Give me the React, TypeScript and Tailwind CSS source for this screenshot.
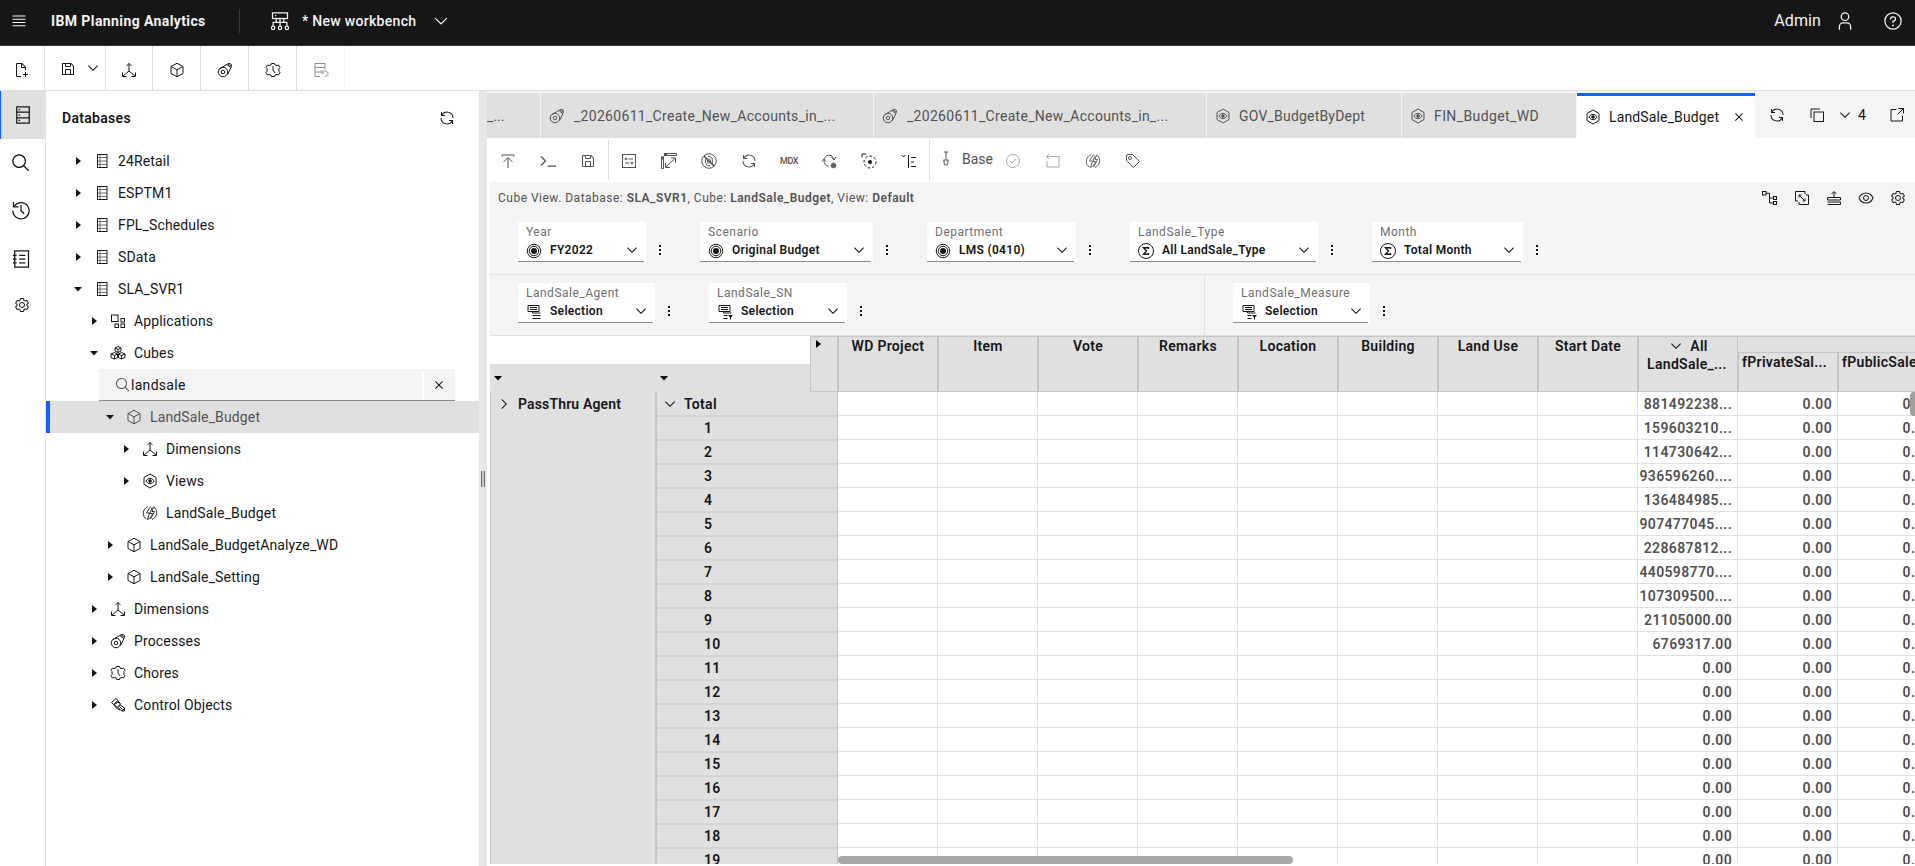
import type { ReactNode } from "react";
import clsx from "clsx";

// All glyphs live on a 32 unit grid, drawn with a 2 unit stroke
const solid = (d: string) => <path d={d} fill="currentColor" stroke="none" />;

const ICONS: Record<string, ReactNode> = {
  menu: <path d="M3 6h26M3 12.500h26M3 19h26M3 25.500h26" />,
  chevron: solid("M16 22 6 12l1.4-1.4 8.6 8.6 8.6-8.6L26 12z"),
  chevronRight: solid("M22 16 12 26l-1.4-1.4 8.6-8.6-8.6-8.6L12 6z"),
  workbench: (
    <>
      <rect x="4" y="3" width="24" height="9" />
      <path d="M8 7.5h2M16 12v12M10 18v-6M22 18v-6M5 24v-6h22v6" />
      <circle cx="5" cy="27" r="2.7" />
      <circle cx="16" cy="27" r="2.7" />
      <circle cx="27" cy="27" r="2.7" />
    </>
  ),
  user: <path d="M16 3a6 6 0 1 1 0 12a6 6 0 0 1 0-12M7 30v-5a6 6 0 0 1 6-6h6a6 6 0 0 1 6 6v5" />,
  help: (
    <>
      <circle cx="16" cy="16" r="13" />
      <path d="M12 13.5V13a3.5 3.5 0 0 1 3.5-3.5h1a3.25 3.25 0 0 1 0 6.7H16V19" />
      <circle cx="16" cy="23" r="1.5" fill="currentColor" stroke="none" />
    </>
  ),
  newDoc: (
    <>
      {solid("M30 24h-4v-4h-2v4h-4v2h4v4h2v-4h4z")}
      {solid("M16 28H8V4h8v6a2 2 0 0 0 2 2h6v4h2V10a.91.91 0 0 0-.3-.7l-7-7A.91.91 0 0 0 18 2H8a2 2 0 0 0-2 2v24a2 2 0 0 0 2 2h8zM18 4.4 23.6 10H18z")}
    </>
  ),
  save: solid("M27.71 9.29l-5-5A1 1 0 0 0 22 4H6a2 2 0 0 0-2 2v20a2 2 0 0 0 2 2h20a2 2 0 0 0 2-2V10a1 1 0 0 0-.29-.71zM12 6h8v4h-8zm8 20h-8v-8h8zm2 0v-8a2 2 0 0 0-2-2h-8a2 2 0 0 0-2 2v8H6V6h4v4a2 2 0 0 0 2 2h8a2 2 0 0 0 2-2V6.41l4 4V26z"),
  dimension: <path d="M16 3v15M11 8l5-5 5 5M16 18 4 28M16 18l12 10M3 21v8h8M29 21v8h-8" />,
  cube: <path d="M16 2.5 28 9v14l-12 6.5L4 23V9zM4 9l12 6.7L28 9M16 15.7v13.8" />,
  process: (
    <>
      <circle cx="12" cy="20" r="9.500" />
      <circle cx="12" cy="20" r="3.5" />
      <path d="M5 14 21 4l5-1 3 2-1 6-7 14M20 5l7 6M22 3.5l6 5" />
    </>
  ),
  chore: (
    <>
      <path d="M13 3h6l1 3 4 1 3-1 3 5-2 2v6l2 2-3 5-3-1-4 1-1 3h-6l-1-3-4-1-3 1-3-5 2-2v-6l-2-2 3-5 3 1 4-1z" />
      <path d="M16 8v8l4 6" />
    </>
  ),
  dbUndo: (
    <>
      <path d="M14 29H4V3h20v12M4 11h20M4 20h10M8 7h1M8 15.500h1M8 24.500h1" />
      <path d="M16 16v6h6M17 21c4-5 12-4 13 2 0 4-3 6-6 6" />
    </>
  ),
  database: (
    <>
      <rect x="6" y="3" width="20" height="26" />
      <path d="M6 11.500h20M6 20.500h20M9 7.300h2.500M9 16h2.500M9 24.700h2.500" />
    </>
  ),
  databaseSm: (
    <>
      <rect x="7" y="3" width="19" height="26" />
      <path d="M7 9h19M7 16h19M7 23h19M12 3v26" strokeWidth="1.200" />
    </>
  ),
  search: solid("M29 27.586l-7.552-7.552a11.018 11.018 0 1 0-1.414 1.414L27.586 29zM4 13a9 9 0 1 1 9 9 9.01 9.01 0 0 1-9-9z"),
  history: (
    <>
      <path d="M5.5 9.500A13 13 0 1 1 3 17M4 3v8h8" />
      <path d="M16 8v9l5 5" />
    </>
  ),
  notebook: (
    <>
      <rect x="6" y="3" width="22" height="26" />
      <path d="M3 10h6M3 16h6M3 22h6M13 10h10M13 16h10M13 22h10" />
    </>
  ),
  settings: (
    <>
      {solid("M27 16.760c0-.25 0-.5 0-.76s0-.51 0-.77l1.920-1.680A2 2 0 0 0 29.300 11L26.940 7a2 2 0 0 0-1.730-1 2 2 0 0 0-.64.1l-2.430.82a11.350 11.350 0 0 0-1.310-.75l-.51-2.520a2 2 0 0 0-2-1.610H13.640a2 2 0 0 0-2 1.610l-.51 2.520a11.480 11.480 0 0 0-1.320.75L7.430 6.060A2 2 0 0 0 6.790 6 2 2 0 0 0 5.060 7L2.700 11a2 2 0 0 0 .41 2.510L5 15.240c0 .25 0 .5 0 .76s0 .51 0 .77l-1.890 1.680A2 2 0 0 0 2.700 21L5.060 25a2 2 0 0 0 1.730 1 2 2 0 0 0 .64-.1l2.430-.82a11.350 11.350 0 0 0 1.310.75l.51 2.520a2 2 0 0 0 2 1.610h4.720a2 2 0 0 0 2-1.610l.51-2.520a11.480 11.480 0 0 0 1.320-.75l2.420.82a2 2 0 0 0 .64.1 2 2 0 0 0 1.730-1L29.300 21a2 2 0 0 0-.41-2.510zM25.210 24l-3.430-1.160a8.860 8.860 0 0 1-2.710 1.570L18.360 28h-4.720l-.71-3.550a9.360 9.360 0 0 1-2.700-1.570L6.790 24 4.430 20l2.720-2.400a8.900 8.900 0 0 1 0-3.130L4.430 12 6.790 8l3.430 1.160a8.860 8.860 0 0 1 2.710-1.570L13.640 4h4.720l.71 3.550a9.360 9.360 0 0 1 2.700 1.570L25.210 8 27.570 12l-2.720 2.400a8.900 8.900 0 0 1 0 3.130L27.570 20z")}
      <circle cx="16" cy="16" r="5" />
    </>
  ),
  renew: solid("M12 10H6.780A11 11 0 0 1 27 16h2A13 13 0 0 0 6 7.680V4H4v8h8zm8 12h5.220A11 11 0 0 1 5 16H3a13 13 0 0 0 23 8.320V28h2v-8h-8z"),
  close: solid("M24 9.400 22.600 8 16 14.600 9.400 8 8 9.400l6.600 6.600L8 22.600 9.400 24l6.600-6.600 6.600 6.600 1.400-1.400-6.600-6.600z"),
  apps: (
    <>
      <rect x="3" y="4" width="13" height="13" />
      <rect x="22" y="11" width="7" height="7" />
      <rect x="10" y="22" width="7" height="7" />
      <rect x="22" y="22" width="7" height="7" />
    </>
  ),
  cubes: (
    <path d="m16 3 6 3v6l-6 3-6-3V6zM10 6l6 3 6-3M16 9v6M9 15l6 3v7l-6 3-7-3v-7zM2 18l7 3 6-3M9 21v7M23 15l-6 3v7l6 3 7-3v-7zM30 18l-7 3-6-3M23 21v7" />
  ),
  view: (
    <>
      <path d="M16 2 28 9v14l-12 7-12-7V9z" />
      <path d="M7.500 16q8.500-11 17 0-8.500 11-17 0z" />
      <circle cx="16" cy="16" r="2.500" fill="currentColor" />
    </>
  ),
  bolt: (
    <path d="M12 3C0 8 0 24 9 28M20 29c12-5 12-21 3-25M17 3 9 16h6l-4 13c6-2 9-7 10-12h-5l4-12M23 4l-3 9h5l-8 15" strokeWidth="1.800" />
  ),
  control: (
    <path d="M3 11 12 3l4 4-9 8zM9 15l7-5 5 4-7 7zM16 21l5-5 8 6v6h-5zM7 15l8 9 5 2M16 8l5 5M20 20l5 5M24 28l5-5" />
  ),
  upload: <path d="M4 7V4h24v3M16 30V10M7 18l9-9 9 9" />,
  console: <path d="m2 7 9 9-9 9M15 26h17" strokeWidth="2.500" />,
  panel: (
    <>
      <rect x="3" y="3" width="26" height="26" />
      <circle cx="10" cy="12" r="1.800" />
      <circle cx="22" cy="20" r="1.800" />
      <path d="M15 12h9M8 20h9" />
    </>
  ),
  resize: (
    <>
      <path d="M1 8h4v23H1zM7 1h24v4H7zM10 28 28 11M20 10h9v9M9 20v9h9" />
      {solid("M0 7h6v6H0zM6 0h6v6H6z")}
    </>
  ),
  exclude: (
    <>
      <circle cx="16" cy="16" r="14.500" />
      <path d="M14 7c7-2 11 6 8 14M18 25c-7 2-11-6-8-14M15 12c4-1 5 3 4 6M17 20c-4 1-5-3-4-6" />
      <path d="m6 6 20 20" strokeWidth="3.200" />
    </>
  ),
  renewCog: (
    <>
      <path d="M6 15C6 3 22 0 26 12M21 9l5 5 4-6M2 17l4-5 4 5M6 15c0 7 4 11 9 11" />
      <circle cx="25" cy="25" r="3.500" strokeWidth="3" />
      <path d="M25 19v12M19 25h12M21 21l8 8M29 21l-8 8" strokeWidth="1.200" />
    </>
  ),
  focus: (
    <>
      <circle cx="18" cy="18" r="12" strokeDasharray="5 4" />
      <circle cx="18" cy="18" r="4" fill="currentColor" stroke="none" />
      <path d="M2 9V2h8" />
    </>
  ),
  collapse: <path d="m1 4 4 4 4-4M15 4v26M20 9h10M20 18h6M20 27h10" />,
  sandbox: (
    <>
      <path d="M12 2h8M16 2v15M11 18h10" />
      <path d="M12 18v6l2 4h4l2-4v-6" />
    </>
  ),
  check: (
    <>
      <circle cx="16" cy="16" r="13" />
      <path d="m10 16 4 4 8-8" />
    </>
  ),
  undo: <path d="M8 2 3 7l5 5M3 7h25v21H4V16" />,
  tag: (
    <>
      <path d="M3 4v11l14 14 12-12L15 3H4z" />
      <circle cx="10" cy="10" r="3" />
    </>
  ),
  copy: (
    <>
      <rect x="10" y="10" width="19" height="19" />
      <path d="M4 22V4h18" />
    </>
  ),
  launch: <path d="M15 5H4v23h23V17M19 3h10v10M29 3 17 15" />,
  hierarchy: (
    <>
      <rect x="1" y="3" width="7" height="7" />
      <path d="M8 6.500h7V26h7M15 16h7" />
      <rect x="23" y="13" width="6" height="6" />
      <rect x="23" y="23" width="6" height="6" />
    </>
  ),
  swap: (
    <>
      <path d="M8 22H3V3h19v5M24 10h5v19H10v-5" />
      <path d="M10 10l12 12M10 15v-5h5M22 17v5h-5" />
    </>
  ),
  totals: <path d="M3 15h26v5H3zM3 24h26v5H3M16 14V4M11 8l5-5 5 5" />,
  eye: (
    <>
      {solid("M30.940 15.660A16.690 16.690 0 0 0 16 5 16.690 16.690 0 0 0 1.060 15.660a1 1 0 0 0 0 .68A16.690 16.690 0 0 0 16 27 16.690 16.690 0 0 0 30.940 16.340a1 1 0 0 0 0-.68zM16 25c-5.300 0-10.900-3.930-12.930-9C5.100 10.930 10.700 7 16 7s10.900 3.930 12.930 9C26.900 21.070 21.300 25 16 25z")}
      <circle cx="16" cy="16" r="5" />
    </>
  ),
  target: (
    <>
      <circle cx="16" cy="16" r="13.500" />
      <circle cx="16" cy="16" r="9.500" />
      <circle cx="16" cy="16" r="6" fill="currentColor" stroke="none" />
    </>
  ),
  sigma: (
    <>
      <circle cx="16" cy="16" r="15" />
      <path d="M21 12V9.500H11l6 6.500-6 6.500h10V20" strokeWidth="2.800" />
    </>
  ),
  list: (
    <>
      <path d="M4 3h22v12H4zM8 7h14M8 11h14" />
      <path d="M13 15v3h16M13 23h16M13 29h16" />
    </>
  ),
  listFilter: (
    <>
      <path d="M4 3h22v12H4zM8 7h14M8 11h14" />
      <path d="M13 15v3h16M13 23h8M13 29h8" />
      {solid("M22 22h10l-4 5v4h-2v-4z")}
    </>
  ),
  dots: (
    <g fill="currentColor" stroke="none">
      <rect x="14" y="6" width="4" height="4" />
      <rect x="14" y="14" width="4" height="4" />
      <rect x="14" y="22" width="4" height="4" />
    </g>
  ),
};

function Icon({ name, className = "size-4" }: { name: string; className?: string }) {
  return (
    <svg viewBox="0 0 32 32" fill="none" stroke="currentColor" strokeWidth="2" className={clsx("shrink-0", className)}>
      {ICONS[name]}
    </svg>
  );
}

function Caret({ open }: { open?: boolean }) {
  return (
    <svg viewBox="0 0 8 8" fill="currentColor" className="size-2 shrink-0">
      <path d={open ? "M0 2h8L4 6.500z" : "M2 0v8l5-4z"} />
    </svg>
  );
}

interface TreeNode {
  label: string;
  icon: string;
  level: number;
  open?: boolean;
  leaf?: boolean;
  selected?: boolean;
}

const topNodes: TreeNode[] = [
  { label: "24Retail", icon: "databaseSm", level: 0 },
  { label: "ESPTM1", icon: "databaseSm", level: 0 },
  { label: "FPL_Schedules", icon: "databaseSm", level: 0 },
  { label: "SData", icon: "databaseSm", level: 0 },
  { label: "SLA_SVR1", icon: "databaseSm", level: 0, open: true },
  { label: "Applications", icon: "apps", level: 1 },
  { label: "Cubes", icon: "cubes", level: 1, open: true },
];

const cubeNodes: TreeNode[] = [
  { label: "LandSale_Budget", icon: "cube", level: 2, open: true, selected: true },
  { label: "Dimensions", icon: "dimension", level: 3 },
  { label: "Views", icon: "view", level: 3 },
  { label: "LandSale_Budget", icon: "bolt", level: 3, leaf: true },
  { label: "LandSale_BudgetAnalyze_WD", icon: "cube", level: 2 },
  { label: "LandSale_Setting", icon: "cube", level: 2 },
  { label: "Dimensions", icon: "dimension", level: 1 },
  { label: "Processes", icon: "process", level: 1 },
  { label: "Chores", icon: "chore", level: 1 },
  { label: "Control Objects", icon: "control", level: 1 },
];

const indents = ["pl-[24px]", "pl-[40px]", "pl-[56px]", "pl-[72px]"];

function TreeRow({ node }: { node: TreeNode }) {
  return (
    <div
      className={clsx(
        "flex h-8 items-center border-l-4",
        node.selected ? "border-[#0f62fe] bg-[#e0e0e0] text-[#525252]" : "border-transparent"
      )}
    >
      <div className={clsx("flex items-center", indents[node.level])}>
        <span className="flex w-5 shrink-0 text-[#161616]">{!node.leaf && <Caret open={node.open} />}</span>
        <Icon name={node.icon} />
        <span className="pb-px pl-2 tracking-[0.14px]">{node.label}</span>
      </div>
    </div>
  );
}

function Header() {
  return (
    <header className="flex h-[46px] shrink-0 items-center border-b border-[#393939] bg-[#161616] pb-[3px] text-[#f4f4f4]">
      <Icon name="menu" className="ml-[11px] size-4" />
      <span className="ml-6 w-[188px] font-bold tracking-[0.4px]">IBM Planning Analytics</span>
      <span className="h-6 w-px bg-[#393939]" />
      <Icon name="workbench" className="ml-[30px] size-5" />
      <span className="ml-3 w-[129px] font-medium">* New workbench</span>
      <Icon name="chevron" className="size-5" />
      <span className="ml-auto text-base tracking-[0.1px]">Admin</span>
      <Icon name="user" className="ml-[14px] size-5" />
      <Icon name="help" className="mr-3 ml-7 size-5" />
    </header>
  );
}

function MainToolbar() {
  const cell = "flex h-full items-center justify-center border-r border-[#e0e0e0]";
  return (
    <div className="flex h-[45px] shrink-0 items-center border-b border-[#e0e0e0]">
      <div className={clsx(cell, "w-[45px] pt-1 pr-0.5")}><Icon name="newDoc" /></div>
      <div className={clsx(cell, "w-[61px] gap-[9px] pt-0.5 pl-[10px]")}>
        <Icon name="save" />
        <Icon name="chevron" className="mb-0.5 size-4" />
      </div>
      <div className={clsx(cell, "w-[47px] pt-1")}><Icon name="dimension" /></div>
      <div className={clsx(cell, "w-12 pt-1")}><Icon name="cube" /></div>
      <div className={clsx(cell, "w-12 pt-1")}><Icon name="process" /></div>
      <div className={clsx(cell, "w-12 pt-1")}><Icon name="chore" /></div>
      <div className="flex h-full w-12 items-center justify-center border-r border-[#f4f4f4] pt-1 text-[#8d8d8d]">
        <Icon name="dbUndo" />
      </div>
    </div>
  );
}

function Rail() {
  return (
    <nav className="flex w-[46px] shrink-0 flex-col border-r border-[#e0e0e0]">
      <div className="flex h-12 items-center justify-center border-l border-[#0f62fe] bg-[#e0e0e0]">
        <Icon name="database" className="size-5" />
      </div>
      <div className="flex h-12 items-center pl-[11px]"><Icon name="search" className="size-5" /></div>
      <div className="flex h-12 items-center pb-0.5 pl-[11px]"><Icon name="history" className="size-5" /></div>
      <div className="flex h-12 items-center pb-px pl-[11px]"><Icon name="notebook" className="size-5" /></div>
      <div className="flex h-12 items-center pb-1 pl-[14px]"><Icon name="settings" /></div>
    </nav>
  );
}

function DatabasePanel() {
  return (
    <aside className="w-[433px] shrink-0">
      <div className="flex h-[54px] items-center justify-between pr-6 pl-4">
        <h2 className="font-semibold">Databases</h2>
        <Icon name="renew" />
      </div>
      {topNodes.map((node) => <TreeRow key={node.label} node={node} />)}
      <div className="ml-[53px] flex h-8 w-[356px] items-center border-b border-[#8d8d8d] bg-[#f4f4f4]">
        <Icon name="search" className="ml-4 size-4 text-[#525252]" />
        <span className="flex-1">landsale</span>
        <span className="h-7 w-0.5 bg-white" />
        <span className="flex w-[31px] pl-[7px]"><Icon name="close" /></span>
      </div>
      {cubeNodes.map((node, i) => <TreeRow key={i} node={node} />)}
    </aside>
  );
}

function Tab({ icon, label, className }: { icon: string; label: string; className: string }) {
  return (
    <div className={clsx("flex shrink-0 items-center border-r border-[#f4f4f4] bg-[#e0e0e0] pl-2 text-[#525252]", className)}>
      <Icon name={icon} />
      <span className="whitespace-nowrap">{label}</span>
    </div>
  );
}

function TabStrip() {
  return (
    <div className="flex h-[47px] shrink-0 bg-[#f4f4f4] pt-0.5">
      <div className="flex w-[54px] shrink-0 items-center border-r border-[#f4f4f4] bg-[#e0e0e0] tracking-[0px] text-[#525252]">_...</div>
      <Tab icon="process" label="_20260611_Create_New_Accounts_in_..." className="w-[333px] gap-[9px] tracking-[0.3px]" />
      <Tab icon="process" label="_20260611_Create_New_Accounts_in_..." className="w-[333px] gap-[9px] tracking-[0.3px]" />
      <Tab icon="view" label="GOV_BudgetByDept" className="w-[195px] gap-2 tracking-[0.2px]" />
      <Tab icon="view" label="FIN_Budget_WD" className="w-[175px] gap-2 tracking-[0.4px]" />
      <div className="flex w-[178px] shrink-0 items-center border-t-[3px] border-[#0f62fe] bg-white pl-2">
        <Icon name="view" />
        <span className="w-[120px] pl-2 tracking-[0.14px]">LandSale_Budget</span>
        <Icon name="close" className="ml-[10px] size-4" />
      </div>
      <div className="flex flex-1 items-center pb-0.5 pl-[14px]">
        <Icon name="renew" />
        <Icon name="copy" className="ml-6 size-4" />
        <Icon name="chevron" className="ml-3 size-4" />
        <span className="ml-[5px]">4</span>
        <Icon name="launch" className="mr-[10px] ml-auto size-4" />
      </div>
    </div>
  );
}

function ToolCell({ name, className }: { name: string; className?: string }) {
  return (
    <span className={clsx("flex w-10 shrink-0 items-center justify-center pt-0.5", className)}>
      <Icon name={name} />
    </span>
  );
}

function ViewToolbar() {
  return (
    <div className="flex h-11 shrink-0 items-center pl-px text-[#525252]">
      <ToolCell name="upload" />
      <ToolCell name="console" />
      <ToolCell name="save" />
      <span className="h-10 w-px bg-[#e0e0e0]" />
      <ToolCell name="panel" />
      <ToolCell name="resize" />
      <ToolCell name="exclude" />
      <ToolCell name="renew" />
      <span className="flex w-10 justify-center pt-0.5 text-[9px] font-medium tracking-[-0.5px]">MDX</span>
      <ToolCell name="renewCog" />
      <ToolCell name="focus" className="text-[#161616]" />
      <ToolCell name="collapse" className="text-[#161616]" />
      <span className="h-10 w-px bg-[#e0e0e0]" />
      <Icon name="sandbox" className="mr-2 mb-0.5 ml-2 size-4" />
      <span className="w-[31px] pb-[3px] tracking-[0px]">Base</span>
      <ToolCell name="check" className="text-[#a8a8a8]" />
      <ToolCell name="undo" className="text-[#a8a8a8]" />
      <ToolCell name="bolt" />
      <ToolCell name="tag" />
    </div>
  );
}

interface PickerProps {
  label: string;
  value: string;
  icon: string;
  width: string;
}

function Picker({ label, value, icon, width }: PickerProps) {
  return (
    <div className="flex shrink-0">
      <div className={clsx("h-10 bg-white pr-0.5", width)}>
        <div className="flex h-full flex-col border-b border-[#8d8d8d] pl-2 text-xs tracking-[0.5px]">
          <span className="h-5 leading-5 text-[#6f6f6f]">{label}</span>
          <span className="flex h-4 items-center">
            <Icon name={icon} className="mt-0.5 size-4" />
            <span className="flex-1 pl-2 font-semibold tracking-[0.3px] whitespace-nowrap">{value}</span>
            <Icon name="chevron" className="mr-1 size-4" />
          </span>
        </div>
      </div>
      <Icon name="dots" className="mt-5 ml-1.5 size-4" />
    </div>
  );
}

const contextPickers: PickerProps[] = [
  { label: "Year", value: "FY2022", icon: "target", width: "w-[128px]" },
  { label: "Scenario", value: "Original Budget", icon: "target", width: "w-[173px]" },
  { label: "Department", value: "LMS (0410)", icon: "target", width: "w-[149px]" },
  { label: "LandSale_Type", value: "All LandSale_Type", icon: "sigma", width: "w-[188px]" },
  { label: "Month", value: "Total Month", icon: "sigma", width: "w-[151px]" },
];

const columns = ["WD Project", "Item", "Vote", "Remarks", "Location", "Building", "Land Use", "Start Date"];

const rows: [string, string][] = [
  ["Total", "881492238..."],
  ["1", "159603210..."],
  ["2", "114730642..."],
  ["3", "936596260...."],
  ["4", "136484985..."],
  ["5", "907477045...."],
  ["6", "228687812..."],
  ["7", "440598770...."],
  ["8", "107309500...."],
  ["9", "21105000.00"],
  ["10", "6769317.00"],
  ["11", "0.00"],
  ["12", "0.00"],
  ["13", "0.00"],
  ["14", "0.00"],
  ["15", "0.00"],
  ["16", "0.00"],
  ["17", "0.00"],
  ["18", "0.00"],
  ["19", "0.00"],
];

function GridHeader() {
  const head = "w-[100px] shrink-0 border border-[#c6c6c6] bg-[#e0e0e0] leading-[18px]";
  return (
    <div className="flex h-14 shrink-0 font-semibold">
      <div className="flex w-80 shrink-0 flex-col">
        <div className="h-7" />
        <div className="flex h-7 items-center bg-[#e0e0e0] pl-1 text-black">
          <span className="w-[166px]"><Caret open /></span>
          <Caret open />
        </div>
      </div>
      <div className="w-7 shrink-0 border border-[#c6c6c6] bg-[#e0e0e0] pt-[3px] pl-[3px] text-black"><Caret /></div>
      {columns.map((name) => <div key={name} className={clsx(head, "text-center")}>{name}</div>)}
      <div className={clsx(head, "text-center")}>
        <div className="flex items-center justify-center gap-1.5">
          <Icon name="chevron" />
          All
        </div>
        <div className="pr-0.5">LandSale_...</div>
      </div>
      <div className="flex w-[200px] shrink-0 flex-col">
        <div className="h-4 border-t border-[#c6c6c6] bg-[#e0e0e0]" />
        <div className="flex h-10">
          <div className={clsx(head, "pl-[3px]")}>fPrivateSal...</div>
          <div className={clsx(head, "pl-[3px]")}>fPublicSale...</div>
        </div>
      </div>
    </div>
  );
}

function GridBody() {
  const cell = "h-6 w-[100px] shrink-0 border-r border-b border-[#e0e0e0]";
  return (
    <div className="flex h-[472px] shrink-0 overflow-hidden">
      <div className="w-[166px] shrink-0 border-r border-l border-[#c6c6c6] bg-[#e0e0e0] font-semibold">
        <div className="flex h-6 items-center gap-[6px] pl-[5px] tracking-[0.15px]">
          <Icon name="chevronRight" />
          PassThru Agent
        </div>
      </div>
      <div className="w-[182px] shrink-0 border-r border-l border-[#c6c6c6] bg-[#e0e0e0] pt-px font-semibold">
        {rows.map(([label], i) => (
          <div key={label} className="flex h-6 items-center border-b-2 border-[#d4d4d4]">
            {i === 0 ? (
              <>
                <Icon name="chevron" className="mr-1.5 ml-[5px] size-4" />
                {label}
              </>
            ) : (
              <span className="pl-[47px]">{label}</span>
            )}
          </div>
        ))}
      </div>
      <div className="w-[1100px] shrink-0 font-semibold text-[#525252]">
        {rows.map(([label, value]) => (
          <div key={label} className="flex">
            {columns.map((name) => <div key={name} className={cell} />)}
            {[value, "0.00", "0.00"].map((v, i) => (
              <div key={i} className={clsx(cell, "pr-[5px] text-right leading-6 tracking-[0.36px]")}>{v}</div>
            ))}
          </div>
        ))}
      </div>
    </div>
  );
}

function CubeView() {
  return (
    <section className="relative ml-[3px] flex min-w-0 flex-1 flex-col overflow-hidden">
      <div className="bg-[#f4f4f4]">
        <div className="flex h-8 items-center justify-between pl-2 text-xs text-[#525252]">
          <p className="tracking-[0.49px]">
            Cube View. Database: <b className="font-semibold">SLA_SVR1</b>, Cube: <b className="font-semibold">LandSale_Budget</b>, View: <b className="font-semibold">Default</b>
          </p>
          <div className="flex gap-4 pr-[9px] text-[#161616]">
            <Icon name="hierarchy" />
            <Icon name="swap" />
            <Icon name="totals" />
            <Icon name="eye" />
            <Icon name="settings" />
          </div>
        </div>
        <div className="flex h-[61px] gap-8 border-b border-[#e0e0e0] pt-2 pl-7">
          {contextPickers.map((p) => <Picker key={p.label} {...p} />)}
        </div>
        <div className="flex h-[61px] border-b border-[#e0e0e0]">
          <div className="flex w-[715px] shrink-0 gap-8 border-r border-[#e0e0e0] pt-2 pl-7">
            <Picker label="LandSale_Agent" value="Selection" icon="list" width="w-[137px]" />
            <Picker label="LandSale_SN" value="Selection" icon="listFilter" width="w-[138px]" />
          </div>
          <div className="pt-2 pl-7">
            <Picker label="LandSale_Measure" value="Selection" icon="listFilter" width="w-[137px]" />
          </div>
        </div>
      </div>
      <GridHeader />
      <GridBody />
      {/* overlay scrollbars */}
      <div className="absolute bottom-0.5 left-[348px] h-2 w-[455px] rounded-full bg-[#a8a8a8]" />
      <div className="absolute top-[210px] right-[-3px] h-6 w-2 rounded-full bg-[#a0a0a0]" />
    </section>
  );
}

export default function App() {
  return (
    <div className="flex h-[866px] w-full flex-col overflow-hidden bg-white font-['Roboto','Liberation_Sans',sans-serif] text-sm tracking-[0.3px] text-[#161616]">
      <Header />
      <MainToolbar />
      <div className="flex min-h-0 flex-1">
        <Rail />
        <DatabasePanel />
        <div className="flex w-2 shrink-0 items-center justify-center bg-[#e8e8e8]">
          <span className="flex h-4 w-1 justify-between border-x border-[#6f6f6f] bg-[#c6c6c6]" />
        </div>
        <main className="flex min-w-0 flex-1 flex-col overflow-hidden">
          <TabStrip />
          <ViewToolbar />
          <CubeView />
        </main>
      </div>
    </div>
  );
}
